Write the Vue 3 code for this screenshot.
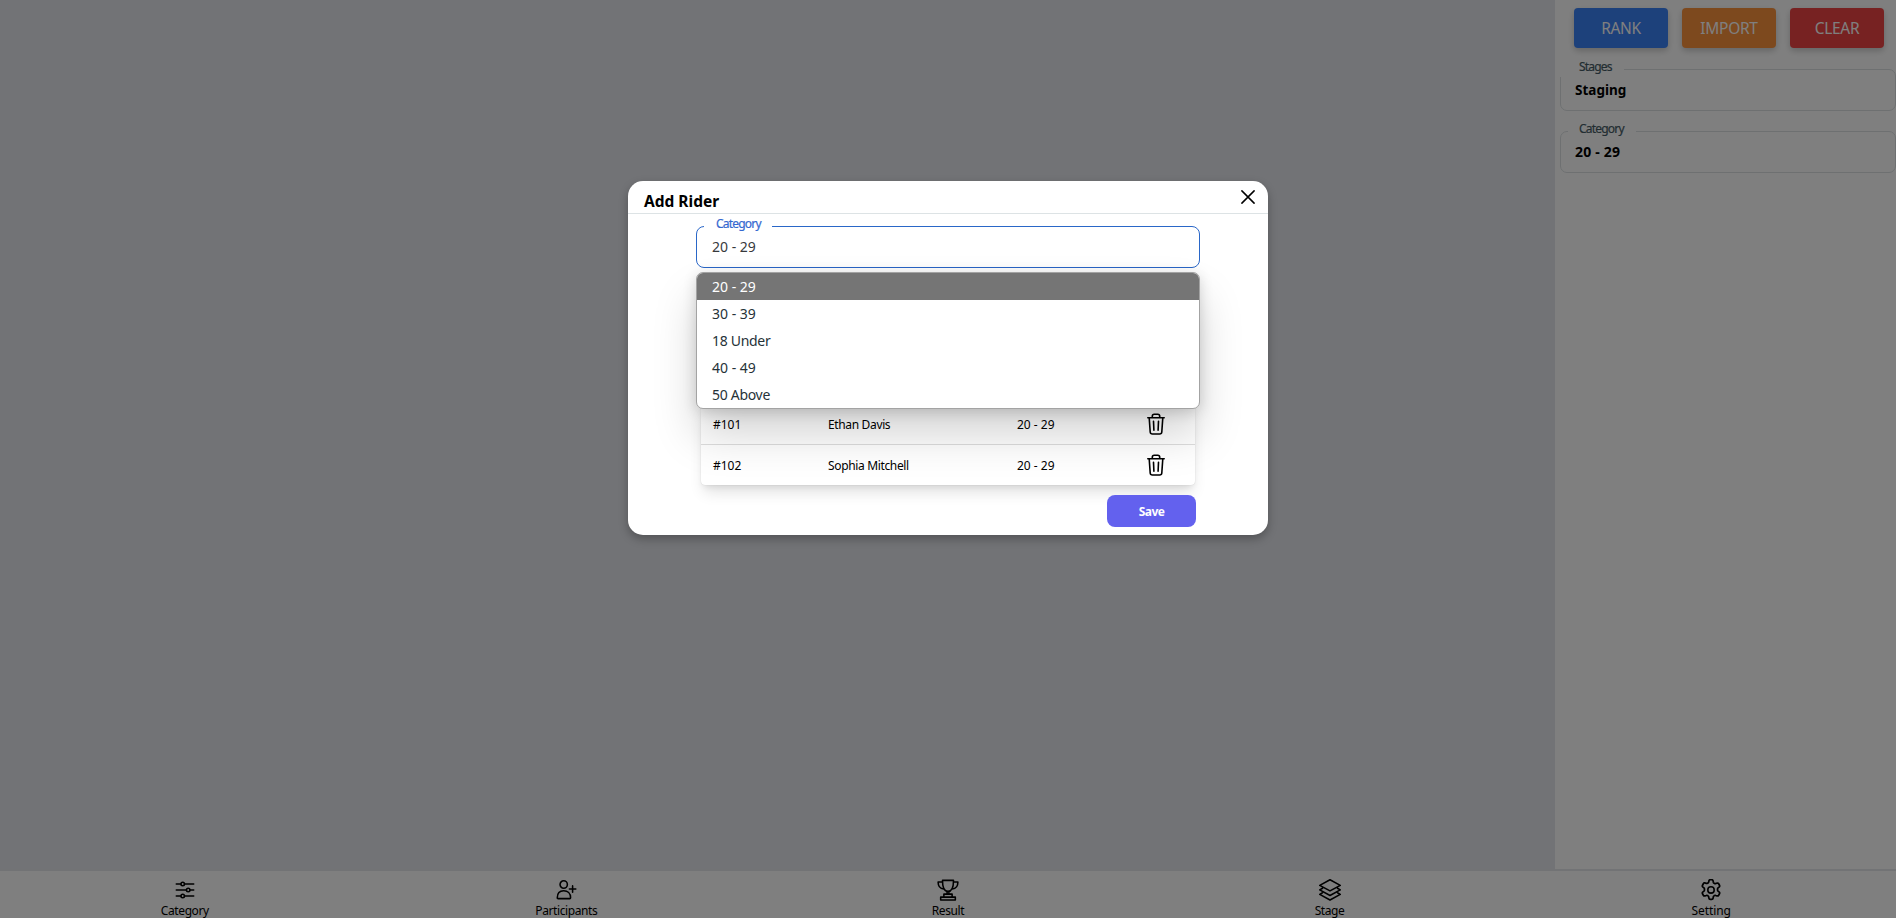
<script setup>
const actions = [
  { label: 'RANK', tone: 'blue' },
  { label: 'IMPORT', tone: 'orange' },
  { label: 'CLEAR', tone: 'red' },
]
const filters = [
  { label: 'Stages', value: 'Staging', key: 'stages' },
  { label: 'Category', value: '20 - 29', key: 'category' },
]
const options = ['20 - 29', '30 - 39', '18 Under', '40 - 49', '50 Above']
const selected = '20 - 29'
const riders = [
  { id: '#101', name: 'Ethan Davis', category: '20 - 29' },
  { id: '#102', name: 'Sophia Mitchell', category: '20 - 29' },
]
const tabs = ['Category', 'Participants', 'Result', 'Stage', 'Setting']
</script>

<template>
  <div class="app">
    <div class="workspace">
      <main class="board"></main>
      <aside class="sidebar">
        <div class="actions">
          <button v-for="a in actions" :key="a.label" class="action" :class="a.tone">{{ a.label }}</button>
        </div>
        <fieldset v-for="f in filters" :key="f.key" class="filter" :class="f.key">
          <legend><span>{{ f.label }}</span></legend>
          <div class="filter-value">{{ f.value }}</div>
        </fieldset>
      </aside>
    </div>

    <nav class="tabs">
      <a v-for="t in tabs" :key="t" class="tab">
        <svg class="tab-icon" viewBox="0 0 24 24" width="22" height="22" fill="none" stroke="#000" stroke-width="1.7" stroke-linecap="round" stroke-linejoin="round">
          <template v-if="t === 'Category'">
            <path d="M2.5 5.5h5M11.5 5.5h10M2.5 12h11M17.5 12h4M2.5 18.5h5M11.5 18.5h10" />
            <circle cx="9.5" cy="5.5" r="1.9" />
            <circle cx="15.5" cy="12" r="1.9" />
            <circle cx="9.5" cy="18.5" r="1.9" />
          </template>
          <template v-else-if="t === 'Participants'">
            <circle cx="9.5" cy="6" r="4" />
            <path d="M2.5 20.5c0-5 2.8-7.7 7-7.7s7.500 2.700 7.500 7.700c0 .6-.3.900-.9.900H3.400c-.6 0-.9-.3-.9-.9zM19.200 7.500v7M15.700 11h7" />
          </template>
          <template v-else-if="t === 'Result'">
            <path d="M6 1.500h12c0 6-1.200 12-6 12S6 7.500 6 1.500zM6 3.300H1.200c0 4.500 2.300 7.200 6.200 7.700M18 3.300h4.800c0 4.500-2.300 7.200-6.200 7.700M11 13.500v3M13 13.500v3M7.500 16.500h9v3.300h-9zM4 19.800h16v3.200H4z" />
          </template>
          <template v-else-if="t === 'Stage'">
            <path d="M12 .8 23.200 6.900 12 13 .8 6.900zM3.800 10.100.8 11.800 12 18l11.200-6.200-3-1.700M3.800 15 .8 16.700 12 22.900l11.200-6.200-3-1.700" />
          </template>
          <template v-else>
            <path d="M9.900 3.500a1.400 1.400 0 0 1 1.400-1.700h1.400a1.400 1.400 0 0 1 1.400 1.200l.2 1.300c.1.400.4.800.8 1 .1.100.2.100.3.200.4.200.9.300 1.300.1l1.200-.4a1.400 1.400 0 0 1 1.700.6l.8 1.500a1.400 1.400 0 0 1-.4 1.800l-1 .8c-.3.300-.5.700-.5 1.100v.9c0 .5.200.9.500 1.200l1 .8a1.400 1.400 0 0 1 .4 1.800l-.8 1.500a1.400 1.400 0 0 1-1.700.6l-1.200-.4c-.4-.2-.9-.1-1.300.1l-.3.200c-.4.200-.7.600-.8 1l-.2 1.300a1.400 1.400 0 0 1-1.400 1.200h-1.400a1.400 1.400 0 0 1-1.400-1.200l-.2-1.300c-.1-.4-.4-.8-.8-1l-.3-.2c-.4-.2-.9-.3-1.300-.1l-1.200.4a1.400 1.400 0 0 1-1.700-.6l-.8-1.500a1.400 1.400 0 0 1 .4-1.800l1-.8c.3-.3.500-.7.500-1.200v-.9c0-.4-.2-.8-.5-1.100l-1-.8a1.400 1.400 0 0 1-.4-1.800l.8-1.500A1.400 1.400 0 0 1 6.100 5l1.200.4c.4.200.9.100 1.300-.1.100-.1.200-.1.300-.2.400-.2.700-.6.800-1z" transform="translate(-1.200 -1.200) scale(1.100)" />
            <circle cx="12" cy="11.900" r="3.500" />
          </template>
        </svg>
        <span class="tab-label" :class="t.toLowerCase()">{{ t }}</span>
      </a>
    </nav>

    <div class="overlay">
      <section class="modal">
        <header class="modal-head">
          <h2>Add Rider</h2>
          <svg class="close" viewBox="0 0 14 14" width="14" height="14" fill="none" stroke="#000" stroke-width="1.500" stroke-linecap="round">
            <path d="M.9.900 13.100 13.100M13.100.900.900 13.100" />
          </svg>
        </header>
        <div class="select">
          <fieldset class="select-box">
            <legend><span>Category</span></legend>
            <div class="select-value">{{ selected }}</div>
          </fieldset>
          <ul class="menu">
            <li v-for="o in options" :key="o" :class="{ active: o === selected, wordy: !o.includes('-') }">{{ o }}</li>
          </ul>
        </div>
        <div class="table">
          <div v-for="r in riders" :key="r.id" class="row">
            <span>{{ r.id }}</span>
            <span class="rider-name">{{ r.name }}</span>
            <span>{{ r.category }}</span>
            <svg class="trash" viewBox="0 0 18 22" width="18" height="22" fill="none" stroke="#000" stroke-width="1.600" stroke-linecap="round" stroke-linejoin="round">
              <path d="M.8 4.800h16.400M2.200 4.800l1 14.200c.1 1.300.9 2 2.200 2h7.200c1.300 0 2.100-.7 2.200-2l1-14.200M5.300 4.600V3.200c0-1.200.7-1.900 1.900-1.900h3.600c1.200 0 1.900.7 1.900 1.900v1.400M6.500 8.200l.4 9M11.500 8.200l-.4 9" />
            </svg>
          </div>
        </div>
        <button class="save">Save</button>
      </section>
    </div>
  </div>
</template>

<style>
html,
body {
  margin: 0;
  overflow: hidden;
}
</style>

<style scoped>
.app {
  position: relative;
  display: flex;
  flex-direction: column;
  width: 100%;
  height: 918px;
  overflow: hidden;
  font-family: 'Noto Sans', 'Open Sans', sans-serif;
  color: #000;
  background: #fff;
}
.app * {
  box-sizing: border-box;
}
button {
  border: 0;
  padding: 0;
  font-family: inherit;
}
fieldset {
  margin: 0;
  min-width: 0;
}
.workspace {
  display: flex;
  height: 869px;
  flex: none;
}
.board {
  flex: 1;
  background: #e5e7ed;
}
.sidebar {
  width: 341px;
  padding: 8px 0 0 5px;
  background: #fff;
}
.actions {
  display: flex;
  gap: 14px;
  padding-left: 14px;
}
.action {
  width: 94px;
  height: 40px;
  border-radius: 4px;
  font-size: 15.5px;
  letter-spacing: -0.3px;
  color: #fff;
  box-shadow: 0 3px 6px rgba(0, 0, 0, 0.2);
}
.blue {
  background: #3b82f6;
}
.orange {
  background: #fb923c;
}
.red {
  background: #ef4444;
}
.filter {
  width: 336px;
  height: 49px;
  margin-top: 13px;
  padding: 0;
  border: 1px solid #dce1e3;
  border-radius: 7px;
}
.filter.stages {
  margin-top: 14px;
}
legend {
  height: 15px;
  font-size: 12px;
  line-height: 15px;
  letter-spacing: -0.8px;
}
legend span {
  position: relative;
  top: -3px;
  -webkit-text-stroke: 0.2px currentColor;
}
.filter legend {
  margin-left: 7px;
  padding: 0 12px 0 11px;
  color: #455a64;
}
.filter.stages legend {
  margin-left: -1px;
  padding-left: 19px;
  background: #fff;
}
.filter-value {
  margin-top: 4px;
  padding-left: 14px;
  font-size: 13.5px;
  line-height: 19px;
  font-weight: 700;
}
.category .filter-value {
  margin-top: 3px;
  font-size: 14px;
  letter-spacing: 0.2px;
}
.tabs {
  display: grid;
  grid-template-columns: repeat(5, 381.6px);
  margin-left: -6px;
  height: 49px;
  flex: none;
  border-top: 2px solid #e5e7eb;
  background: #fff;
}
.tab {
  display: flex;
  flex-direction: column;
  align-items: center;
  padding-top: 8px;
}
.tab-icon {
  flex: none;
}
.tab-label {
  margin-top: 2px;
  font-size: 12px;
  line-height: 16px;
  letter-spacing: -0.4px;
}
.tab-label.setting {
  letter-spacing: -0.1px;
}
.overlay {
  position: absolute;
  inset: 0;
  display: flex;
  justify-content: center;
  align-items: flex-start;
  padding-top: 181px;
  background: rgba(0, 0, 0, 0.5);
}
.modal {
  display: flex;
  flex-direction: column;
  width: 640px;
  height: 354px;
  border-radius: 15px;
  background: #fff;
  box-shadow: 0 4px 10px rgba(0, 0, 0, 0.28);
}
.modal-head {
  display: flex;
  justify-content: space-between;
  height: 33px;
  padding: 9px 13px 0 16px;
  border-bottom: 1px solid #dde3e5;
}
h2 {
  margin: 0;
  font-size: 15.5px;
  line-height: 22px;
  font-weight: 700;
}
.close {
  flex: none;
}
.select {
  position: relative;
  width: 504px;
  margin: 5px 0 0 68px;
}
.select-box {
  height: 49px;
  padding: 0;
  border: 1px solid #2a67c8;
  border-radius: 8px;
}
.select-box legend {
  margin-left: 7px;
  padding: 0 11px 0 12px;
  color: #3468d0;
}
.select-value {
  margin-top: 3px;
  padding-left: 15px;
  font-size: 14px;
  line-height: 19px;
  color: #37393c;
}
.menu {
  position: absolute;
  z-index: 2;
  top: 53px;
  left: 0;
  width: 504px;
  height: 137px;
  margin: 0;
  padding: 0;
  list-style: none;
  border: 1px solid #a3a3a3;
  border-radius: 7px;
  background: #fff;
  overflow: hidden;
  box-shadow: 0 26px 44px rgba(0, 0, 0, 0.17), 0 3px 14px rgba(0, 0, 0, 0.16);
}
.menu li {
  height: 27px;
  padding-left: 15px;
  font-size: 14px;
  line-height: 28px;
  color: #263238;
}
.menu li.wordy {
  letter-spacing: -0.3px;
}
.menu li.active {
  background: #757575;
  color: #fff;
}
.table {
  margin: 135px 0 0 73px;
  width: 494px;
  border-radius: 4px;
  background: #fff;
  box-shadow: 0 0 1px rgba(0, 0, 0, 0.2), 0 10px 15px -3px rgba(0, 0, 0, 0.12), 0 4px 6px -2px rgba(0, 0, 0, 0.08);
}
.row {
  display: grid;
  grid-template-columns: 115px 189px 130px 18px;
  align-items: center;
  height: 41px;
  padding: 1px 0 0 12px;
  font-size: 12px;
}
.row + .row {
  padding-top: 0;
  border-top: 1px solid #dedede;
}
.rider-name {
  letter-spacing: -0.35px;
}
.save {
  position: relative;
  z-index: 3;
  width: 89px;
  height: 32px;
  margin: 10px 0 0 479px;
  border-radius: 8px;
  background: #6361ee;
  color: #fff;
  font-size: 12px;
  font-weight: 700;
  letter-spacing: -0.6px;
}
</style>
